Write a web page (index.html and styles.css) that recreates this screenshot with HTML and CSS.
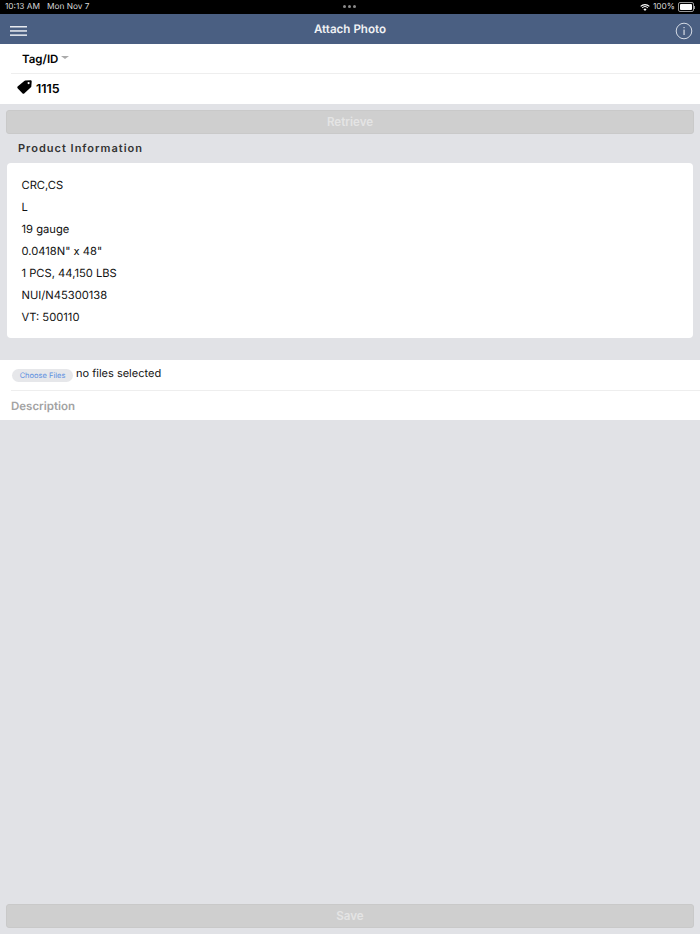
FILE: index.html
```html
<!DOCTYPE html>
<html lang="en">
<head>
  <meta charset="UTF-8">
  <title>Attach Photo</title>
  <link rel="stylesheet" href="styles.css">
</head>
<body>
  <div class="statusbar">
    <div class="status-left"><span>10:13 AM</span><span>Mon Nov 7</span></div>
    <div class="status-dots"><i></i><i></i><i></i></div>
    <div class="status-right">
      <svg class="wifi" width="10" height="7" viewBox="0 0 11 8">
        <path d="M5.5 8 3.7 5.9a2.6 2.6 0 0 1 3.6 0z" fill="#fff"/>
        <path d="M2.7 4.9a4 4 0 0 1 5.6 0l.8-.9a5.2 5.2 0 0 0-7.2 0z" fill="#fff"/>
        <path d="M1 3.1a6.5 6.5 0 0 1 9 0l.9-.9A7.8 7.8 0 0 0 .1 2.2z" fill="#fff"/>
      </svg>
      <span>100%</span>
      <div class="battery"><div class="battery-fill"></div></div>
      <div class="battery-tip"></div>
    </div>
  </div>

  <header class="navbar">
    <svg class="burger" width="17" height="10" viewBox="0 0 17 10">
      <rect y="0" width="17" height="1.5" fill="#e8ebf0"/>
      <rect y="4.2" width="17" height="1.5" fill="#e8ebf0"/>
      <rect y="8.4" width="17" height="1.5" fill="#e8ebf0"/>
    </svg>
    <div class="nav-title">Attach Photo</div>
    <svg class="info" width="18" height="18" viewBox="0 0 18 18">
      <circle cx="9" cy="9" r="7.8" fill="none" stroke="#d5dbe5" stroke-width="1"/>
      <rect x="8.5" y="7.6" width="1.1" height="5.4" fill="#e4e8ee"/>
      <rect x="8.5" y="5" width="1.1" height="1.2" fill="#e4e8ee"/>
    </svg>
  </header>

  <section class="tag-panel">
    <div class="tag-type">Tag/ID <span class="caret"></span></div>
    <div class="tag-value">
      <svg class="tag-icon" width="15" height="14" viewBox="0 0 15 14">
        <path fill-rule="evenodd" d="M8.2.6 13.4.2c.8 0 1.3.5 1.3 1.2l-.4 5c0 .4-.2.7-.4.9L7.2 13.4c-.5.5-1.1.5-1.6 0L.6 8.2c-.5-.5-.5-1.1 0-1.6L7.3 1c.3-.2.6-.4.9-.4zM11.6 2a1.1 1.1 0 1 0 0 2.2 1.1 1.1 0 0 0 0-2.2z" fill="#000"/>
      </svg>
      <span>1115</span>
    </div>
  </section>

  <div class="btn-wrap"><button class="btn" disabled>Retrieve</button></div>

  <h2 class="section-title">Product Information</h2>
  <div class="card">
    <div>CRC,CS</div>
    <div>L</div>
    <div>19 gauge</div>
    <div>0.0418N" x 48"</div>
    <div>1 PCS, 44,150 LBS</div>
    <div>NUI/N45300138</div>
    <div>VT: 500110</div>
  </div>

  <section class="upload-panel">
    <div class="file-row"><span class="file-btn">Choose Files</span><span class="file-text">no files selected</span></div>
    <div class="desc-row">Description</div>
  </section>

  <div class="spacer"></div>

  <div class="btn-wrap save-wrap"><button class="btn" disabled>Save</button></div>
</body>
</html>
```

FILE: styles.css
```css
html, body {
  height: 100%;
}
body {
  margin: 0;
  display: flex;
  flex-direction: column;
  background: #e1e2e6;
  font-family: Inter, "Liberation Sans", sans-serif;
  color: #000;
  text-rendering: geometricPrecision;
}

/* status bar */
.statusbar {
  height: 14px;
  flex: none;
  display: flex;
  align-items: center;
  justify-content: space-between;
  padding: 0 5px;
  background: #000;
  color: #d8d8d8;
  font-size: 8.3px;
  position: relative;
}
.status-left span {
  margin-right: 7px;
}
.status-dots {
  position: absolute;
  left: 343px;
  top: 5px;
  display: flex;
  gap: 2px;
}
.status-dots i {
  width: 3px;
  height: 3px;
  border-radius: 50%;
  background: #8a8a8a;
}
.status-right {
  display: flex;
  align-items: center;
  gap: 3px;
}
.battery {
  width: 12px;
  height: 6px;
  padding: 1px;
  border: 1px solid #999;
  border-radius: 2px;
}
.battery-fill {
  height: 100%;
  background: #fff;
  border-radius: 1px;
}
.battery-tip {
  width: 1px;
  height: 3px;
  margin-left: -3px;
  background: #999;
}

/* nav */
.navbar {
  height: 30px;
  flex: none;
  display: flex;
  align-items: center;
  justify-content: center;
  background: #4a5f82;
  position: relative;
}
.nav-title {
  color: #f0f2f5;
  font-size: 11.6px;
  font-weight: 600;
}
.burger {
  position: absolute;
  left: 10px;
  top: 12px;
}
.info {
  position: absolute;
  right: 7px;
  top: 8px;
}

/* tag */
.tag-panel {
  flex: none;
  background: #fff;
  height: 60px;
}
.tag-type {
  height: 30px;
  box-sizing: border-box;
  margin-left: 11px;
  padding-left: 11px;
  display: flex;
  align-items: center;
  gap: 3px;
  font-size: 11.5px;
  font-weight: 600;
  border-bottom: 1px solid #eeeeee;
}
.caret {
  width: 0;
  height: 0;
  border-left: 4px solid transparent;
  border-right: 4px solid transparent;
  border-top: 3px solid #aaa;
  margin-top: -2px;
}
.tag-value {
  height: 30px;
  display: flex;
  align-items: center;
  padding-left: 17px;
  gap: 4px;
  font-size: 12.5px;
  font-weight: 600;
}
.tag-icon {
  margin-top: -4px;
}

/* buttons */
.btn-wrap {
  flex: none;
  padding: 6px 6px 0;
}
.btn {
  display: block;
  width: 100%;
  height: 24px;
  padding: 0;
  border: 1px solid #c9c9c9;
  border-radius: 3px;
  background: #cfcfcf;
  color: #e4e4e4;
  font-family: inherit;
  font-size: 11.6px;
  font-weight: 600;
}
.save-wrap {
  padding: 0 6px 6px;
}

/* product info */
.section-title {
  margin: 0;
  padding: 7px 18px 0;
  height: 22px;
  box-sizing: border-box;
  font-size: 11px;
  font-weight: 600;
  letter-spacing: 1px;
  line-height: 14px;
  color: #333;
  flex: none;
}
.card {
  flex: none;
  margin: 7px 7px 0;
  padding: 11px 14.5px 10px;
  background: #fff;
  border-radius: 4px;
  font-size: 11.2px;
  line-height: 22px;
  color: #111;
}

/* upload */
.upload-panel {
  flex: none;
  margin-top: 22px;
  background: #fff;
  height: 60px;
}
.file-row {
  height: 31px;
  margin-left: 11px;
  padding-left: 1px;
  display: flex;
  align-items: flex-start;
  border-bottom: 1px solid #eeeeee;
  box-sizing: border-box;
}
.file-btn {
  margin-top: 9px;
  width: 61px;
  height: 13px;
  line-height: 13px;
  text-align: center;
  border-radius: 7px;
  background: #e6e7ea;
  color: #5b8fe0;
  font-size: 7.5px;
}
.file-text {
  margin: 6px 0 0 3px;
  font-size: 11px;
  line-height: 14px;
  color: #111;
}
.desc-row {
  height: 29px;
  padding-left: 11px;
  display: flex;
  align-items: center;
  font-size: 11.5px;
  font-weight: 600;
  color: #a3a3a3;
}
.spacer {
  flex: 1;
}
```
